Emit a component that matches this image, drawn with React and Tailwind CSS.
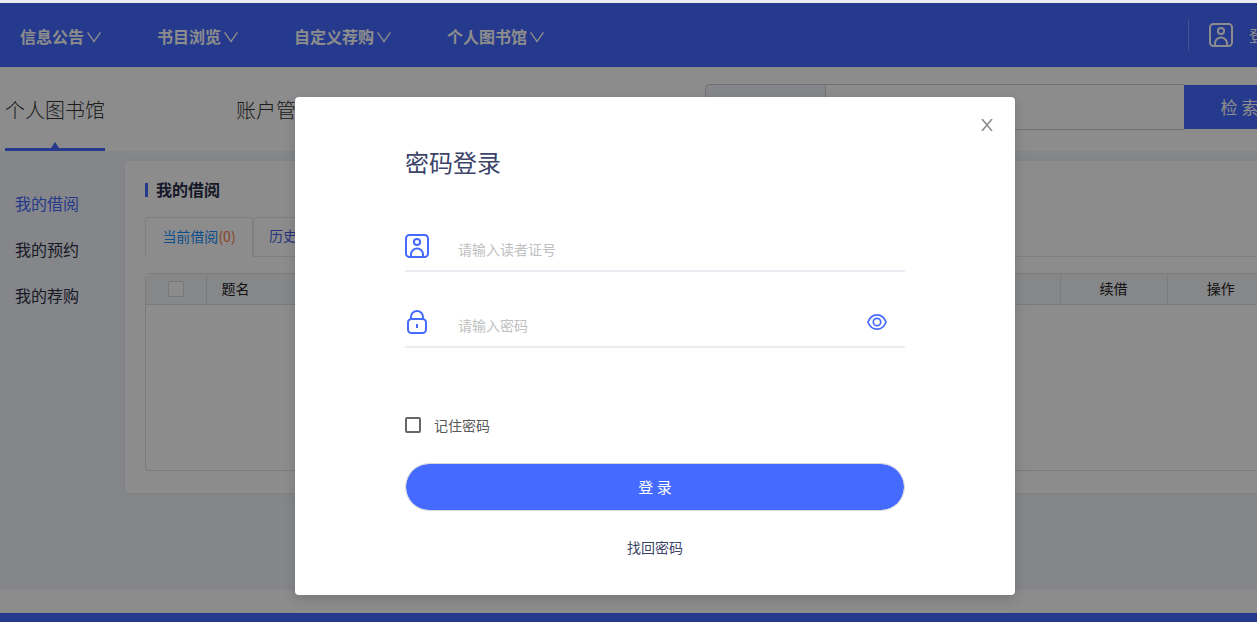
import React from "react";

const navItems = ["信息公告", "书目浏览", "自定义荐购", "个人图书馆"];
const sideItems = ["我的借阅", "我的预约", "我的荐购"];

function ChevronDown() {
  return (
    <svg className="mt-0.5 h-3 w-[14px]" viewBox="0 0 14 12" fill="none" stroke="currentColor" strokeWidth="1.4" aria-hidden="true">
      <path d="M0.6 1.4 L7 10.6 L13.4 1.4" />
    </svg>
  );
}

function ReaderIcon() {
  return (
    <svg className="size-6 shrink-0" viewBox="0 0 24 24" fill="none" stroke="currentColor" strokeWidth="2" aria-hidden="true">
      <rect x="1" y="1" width="22" height="22" rx="3.5" />
      <circle cx="12" cy="8" r="3.1" />
      <path d="M6 22.5 V20.5 A6 6 0 0 1 18 20.5 V22.5" />
    </svg>
  );
}

function LockIcon() {
  return (
    <svg className="size-6 shrink-0" viewBox="0 0 24 24" fill="none" stroke="currentColor" strokeWidth="2" aria-hidden="true">
      <rect x="3" y="9" width="18" height="14" rx="3.5" />
      <path d="M6 9 V7 A6 6 0 0 1 18 7 V9" />
      <path d="M12 14 V18" />
    </svg>
  );
}

function EyeIcon() {
  return (
    <svg className="h-4 w-5" viewBox="0 0 20 16" fill="none" stroke="currentColor" strokeWidth="1.7" aria-hidden="true">
      <path d="M0.9 8 C2.8 3.2 6 0.9 10 0.9 C14 0.9 17.2 3.2 19.1 8 C17.2 12.8 14 15.1 10 15.1 C6 15.1 2.8 12.8 0.9 8 Z" />
      <circle cx="10" cy="8" r="3.7" />
    </svg>
  );
}

function Header() {
  return (
    <header className="flex h-16 items-center justify-between bg-[#446aff] pr-[29px] pl-5 text-base text-white">
      <nav className="flex gap-14 pt-0.5 font-bold">
        {navItems.map((item) => (
          <a key={item} href="#" className="flex items-center gap-[3px]">
            {item}
            <ChevronDown />
          </a>
        ))}
      </nav>
      <div className="flex items-center border-l border-white/30 pl-5">
        <a href="#" className="flex h-8 items-center gap-4">
          <ReaderIcon />
          登录
        </a>
      </div>
    </header>
  );
}

function SubHeader() {
  return (
    <div className="flex h-[84px] justify-between bg-white pr-[15px] pl-[5px]">
      <nav className="flex gap-[131px] text-xl font-light text-[#333]">
        <a href="#" className="flex flex-col items-center justify-end">
          <span className="pb-[18px] leading-7">个人图书馆</span>
          <svg className="h-[6px] w-2" viewBox="0 0 8 6" fill="#446aff" aria-hidden="true">
            <path d="M0 6 L4 0 L8 6 Z" />
          </svg>
          <span className="h-[3px] w-full bg-[#446aff]" />
        </a>
        <a href="#" className="mt-[29px] leading-7">
          账户管理
        </a>
      </nav>
      <form className="mt-[17px] flex h-[46px] w-[590px]">
        <select
          aria-label="检索类型"
          className="w-[121px] appearance-none rounded-l border border-[#cccdd6] bg-[#f2f4f9]"
        />
        <input aria-label="检索词" className="min-w-0 flex-1 border-y border-[#cccdd6]" />
        <button type="button" className="my-px w-[111px] bg-[#446aff] text-[17px] text-white">
          检 索
        </button>
      </form>
    </div>
  );
}

function Loans() {
  return (
    <main className="h-[332px] flex-1 rounded bg-white px-5 pt-4 shadow-[0_0_6px_rgba(0,0,0,0.05)]">
      <h2 className="flex items-center gap-2 text-base font-bold text-[#2a2e4c]">
        <span className="mt-0.5 h-[14px] w-[3px] bg-[#446aff]" />
        我的借阅
      </h2>
      <div className="mt-4 flex text-sm">
        <button type="button" className="h-10 w-[108px] rounded-t border border-b-0 border-[#e8e8e8] pb-1 text-[#1890ff]">
          当前借阅<span className="text-[#ff7a45]">(0)</span>
        </button>
        <button type="button" className="h-10 rounded-t border border-[#e8e8e8] px-[15px] pb-1 text-[#4a5fe8]">
          历史借阅
        </button>
        <div className="flex-1 border-b border-[#e8e8e8]" />
      </div>
      <div className="mt-4 h-[198px] rounded border border-[#e0e0e2]">
        <table className="w-full table-fixed border-collapse text-sm leading-5 text-[#222]">
          <thead>
            <tr className="h-[30px] border-b border-[#e0e0e2] bg-[#f5f6fa]">
              <th className="w-[60px] border-r border-[#e0e0e2] p-0">
                <input
                  type="checkbox"
                  aria-label="全选"
                  className="mx-auto block size-4 appearance-none rounded-xs border border-[#d9d9d9] bg-white"
                />
              </th>
              <th className="px-[15px] pt-0 pb-0.5 text-left font-normal">题名</th>
              <th className="w-[107px] border-l border-[#e0e0e2] p-0 pb-0.5 font-normal">续借</th>
              <th className="w-[107px] border-l border-[#e0e0e2] p-0 pb-0.5 font-normal">操作</th>
            </tr>
          </thead>
        </table>
      </div>
    </main>
  );
}

function LoginDialog() {
  return (
    <div
      role="dialog"
      aria-modal="true"
      aria-labelledby="login-title"
      className="relative w-[720px] rounded bg-white px-[110px] pt-[49px] pb-[36px] shadow-[0_4px_12px_rgba(0,0,0,0.15)]"
    >
      <button type="button" aria-label="关闭" className="absolute top-[22px] right-[22px] text-[#8c8c8c]">
        <svg className="size-3" viewBox="0 0 12 12" fill="none" stroke="currentColor" strokeWidth="1.6" aria-hidden="true">
          <path d="M1 0 L11 12 M11 0 L1 12" />
        </svg>
      </button>
      <h1 id="login-title" className="text-2xl leading-8 text-[#3c4469]">
        密码登录
      </h1>
      <form>
        <label className="mt-[44px] flex h-[50px] items-center gap-[29px] border-b-2 border-[#e9edf2] text-[#446aff]">
          <ReaderIcon />
          <input
            aria-label="读者证号"
            placeholder="请输入读者证号"
            className="h-full min-w-0 flex-1 pt-1.5 text-sm text-[#333] outline-none placeholder:text-[#bfbfbf]"
          />
        </label>
        <div className="mt-[26px] flex h-[50px] items-center border-b-2 border-[#e9edf2] pr-[18px] text-[#446aff]">
          <label className="flex h-full flex-1 items-center gap-[29px]">
            <LockIcon />
            <input
              type="password"
              aria-label="密码"
              placeholder="请输入密码"
              className="h-full min-w-0 flex-1 pt-1.5 text-sm text-[#333] outline-none placeholder:text-[#bfbfbf]"
            />
          </label>
          <button type="button" aria-label="显示密码">
            <EyeIcon />
          </button>
        </div>
        <label className="mt-[65px] flex h-6 items-center gap-[13px] text-sm text-[#595959]">
          <input type="checkbox" className="size-4 appearance-none rounded-xs border-2 border-[#666]" />
          记住密码
        </label>
        <button
          type="button"
          className="mt-[26px] h-12 w-full rounded-full border border-[#d9d9d9] bg-[#446aff] bg-clip-padding text-[15px] text-white"
        >
          登 录
        </button>
        <a href="#" className="mt-6 block text-center text-sm leading-6 text-[#3c4469]">
          找回密码
        </a>
      </form>
    </div>
  );
}

export default function App() {
  return (
    <div className="flex h-screen flex-col overflow-hidden bg-[#ebebef] pt-[3px] font-['Noto_Sans_CJK_SC',sans-serif]">
      <div className="relative flex min-w-[1310px] flex-1 flex-col">
        <Header />
        <SubHeader />
        <div className="flex h-[439px] items-start bg-[#f2f4f9] pt-[10px] pr-[15px]">
          <aside className="flex w-[125px] flex-col gap-[22px] pt-[30px] pl-[15px] text-base text-[#2e3148]">
            {sideItems.map((item, i) => (
              <a key={item} href="#" className={i === 0 ? "text-[#446aff]" : ""}>
                {item}
              </a>
            ))}
          </aside>
          <Loans />
        </div>
        <div className="h-[23px] bg-white" />
        <footer className="flex-1 bg-[#446aff]" />
        <div className="absolute inset-0 flex items-start justify-center bg-black/45 pt-[94px]">
          <LoginDialog />
        </div>
      </div>
    </div>
  );
}
